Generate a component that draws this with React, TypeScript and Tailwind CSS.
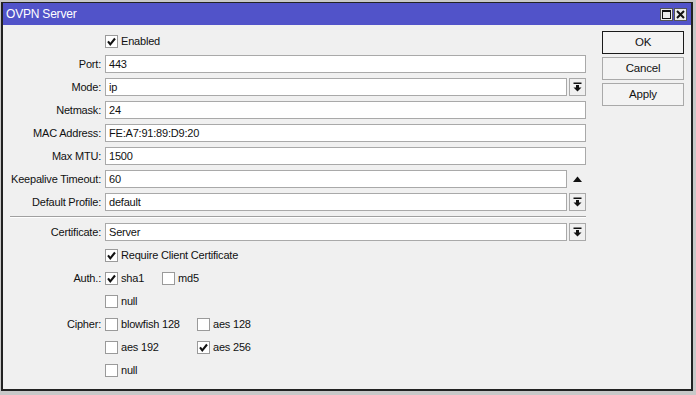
import React from "react";

const Check = ({ checked }: { checked?: boolean }) => (
  <div className="w-[13px] h-[13px] border border-[#9a9a9a] bg-white flex items-center justify-center shrink-0">
    {checked && (
      <svg width="11" height="11" viewBox="0 0 11 11">
        <polyline points="2,5.3 4.3,8.3 9,2.5" fill="none" stroke="#111" strokeWidth="2.1" />
      </svg>
    )}
  </div>
);

const CheckItem = ({ label, checked, w }: { label: string; checked?: boolean; w?: string }) => (
  <div className={`flex items-center gap-[3px] ${w ?? ""}`}>
    <Check checked={checked} />
    <span>{label}</span>
  </div>
);

const DropBtn = () => (
  <div className="ml-[2px] w-[17px] h-[18px] border border-[#a9a9a9] bg-[#f0f0f0] flex items-center justify-center shrink-0">
    <svg width="9" height="10" viewBox="0 0 9 10">
      <rect x="0.5" y="0.5" width="8" height="1.5" fill="#111" />
      <rect x="3" y="3" width="3" height="3" fill="#111" />
      <polygon points="0.5,5.5 8.5,5.5 4.5,9.5" fill="#111" />
    </svg>
  </div>
);

const Row = ({ label, children }: { label?: string; children: React.ReactNode }) => (
  <div className="flex items-center h-[18px]">
    <div className="w-[98px] text-right shrink-0 whitespace-nowrap">{label ? `${label}:` : ""}</div>
    <div className="ml-[4px] flex-1 flex items-center">{children}</div>
  </div>
);

const Field = ({ value }: { value: string }) => (
  <div className="flex-1 h-[18px] border border-[#a9a9a9] bg-white pl-[3px] flex items-center">{value}</div>
);

const Btn = ({ label, primary }: { label: string; primary?: boolean }) => (
  <div
    className={`h-[23px] flex items-center justify-center bg-[#f3f3f3] text-[11.5px] ${
      primary ? "border border-[#1a1a1a]" : "border border-[#a9a9a9]"
    }`}
  >
    {label}
  </div>
);

export default function App() {
  return (
    <div className="w-[696px] h-[395px] bg-[#c8c8c8] overflow-hidden font-['Liberation_Sans',Arial,sans-serif] text-[11px] tracking-[-0.2px] text-[#111]">
      <div className="ml-[1px] mt-[2px] w-[692px] h-[389px] border-x-2 border-b-2 border-t border-[#222] bg-[#f0f0f0] flex flex-col">
        <div className="h-[22px] bg-[#5153c9] flex items-center justify-between pl-[3px] pr-[4px]">
          <span className="text-white text-[12px]">OVPN Server</span>
          <div className="flex gap-[1px]">
            <div className="w-[13px] h-[13px] bg-[#ececec] border border-[#555] flex items-center justify-center">
              <svg width="9" height="9" viewBox="0 0 9 9">
                <rect x="0.5" y="0.5" width="8" height="8" fill="none" stroke="#111" strokeWidth="1" />
                <rect x="0" y="0" width="9" height="2" fill="#111" />
              </svg>
            </div>
            <div className="w-[13px] h-[13px] bg-[#ececec] border border-[#555] flex items-center justify-center">
              <svg width="9" height="9" viewBox="0 0 9 9">
                <path d="M1,1 L8,8 M8,1 L1,8" stroke="#111" strokeWidth="2" />
              </svg>
            </div>
          </div>
        </div>
        <div className="flex flex-1">
          <div className="w-[583px] pt-[7px] flex flex-col gap-[5px]">
            <Row>
              <CheckItem label="Enabled" checked />
            </Row>
            <Row label="Port">
              <Field value="443" />
            </Row>
            <Row label="Mode">
              <Field value="ip" />
              <DropBtn />
            </Row>
            <Row label="Netmask">
              <Field value="24" />
            </Row>
            <Row label="MAC Address">
              <Field value="FE:A7:91:89:D9:20" />
            </Row>
            <Row label="Max MTU">
              <Field value="1500" />
            </Row>
            <Row label="Keepalive Timeout">
              <Field value="60" />
              <div className="ml-[2px] w-[17px] h-[18px] flex items-center justify-center shrink-0">
                <svg width="9" height="6" viewBox="0 0 9 6">
                  <polygon points="0,6 9,6 4.5,0.5" fill="#111" />
                </svg>
              </div>
            </Row>
            <Row label="Default Profile">
              <Field value="default" />
              <DropBtn />
            </Row>
            <div className="ml-[7px] h-[2px] border-t border-[#a0a0a0] border-b border-b-white" />
            <Row label="Certificate">
              <Field value="Server" />
              <DropBtn />
            </Row>
            <Row>
              <CheckItem label="Require Client Certificate" checked />
            </Row>
            <Row label="Auth.">
              <CheckItem label="sha1" checked w="w-[57px]" />
              <CheckItem label="md5" />
            </Row>
            <Row>
              <CheckItem label="null" />
            </Row>
            <Row label="Cipher">
              <CheckItem label="blowfish 128" w="w-[92px]" />
              <CheckItem label="aes 128" />
            </Row>
            <Row>
              <CheckItem label="aes 192" w="w-[92px]" />
              <CheckItem label="aes 256" checked />
            </Row>
            <Row>
              <CheckItem label="null" />
            </Row>
          </div>
          <div className="ml-[16px] w-[82px] pt-[6px] flex flex-col gap-[3px]">
            <Btn label="OK" primary />
            <Btn label="Cancel" />
            <Btn label="Apply" />
          </div>
        </div>
      </div>
    </div>
  );
}
